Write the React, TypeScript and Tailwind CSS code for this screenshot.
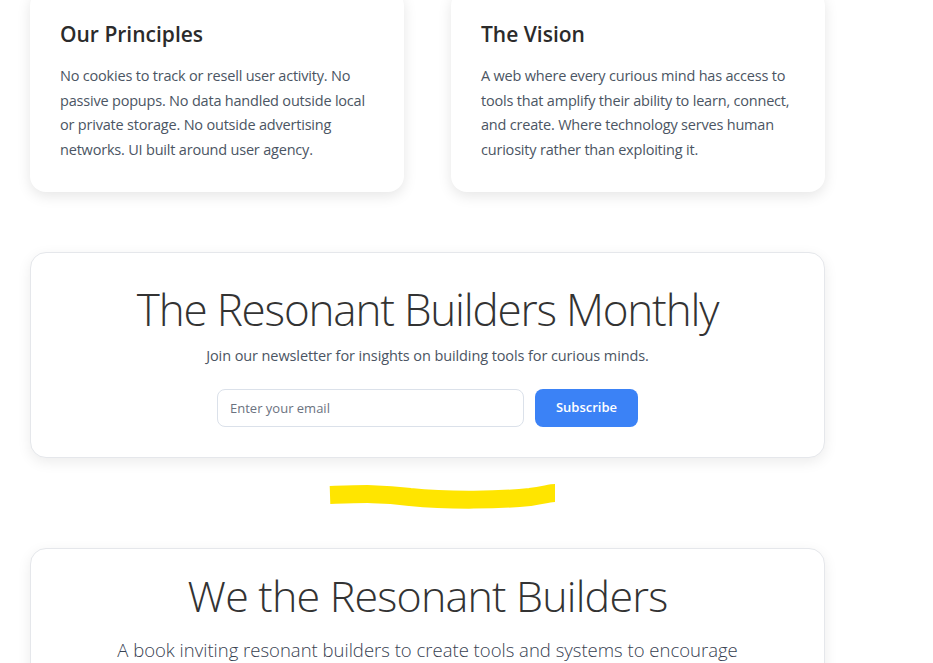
import React from 'react';

const font = { fontFamily: '"Open Sans", "Noto Sans", sans-serif' };

const values = [
  {
    title: 'Our Principles',
    body: 'No cookies to track or resell user activity. No passive popups. No data handled outside local or private storage. No outside advertising networks. UI built around user agency.',
  },
  {
    title: 'The Vision',
    body: 'A web where every curious mind has access to tools that amplify their ability to learn, connect, and create. Where technology serves human curiosity rather than exploiting it.',
  },
];

const Highlight: React.FC = () => (
  <svg className="absolute left-[270px] top-[21px]" width="260" height="40" viewBox="0 0 260 40">
    <path
      d="M30 16 C 60 15, 80 14, 110 18 C 150 22, 200 21, 230 18 C 245 16, 250 14, 255 14"
      fill="none"
      stroke="#ffe500"
      strokeWidth="18"
      strokeLinecap="butt"
    />
  </svg>
);

const App: React.FC = () => {
  return (
    <div className="min-h-screen bg-white overflow-hidden" style={font}>
      <div className="w-[795px] ml-[30px] -mt-[10px]">
        <div className="grid grid-cols-2 gap-[47px]">
          {values.map((v) => (
            <div
              key={v.title}
              className="rounded-2xl bg-white px-[30px] pt-[30px] pb-[30px] shadow-[0_4px_14px_rgba(0,0,0,0.10)]"
            >
              <h3 className="text-[21px] leading-[28px] font-semibold text-[#2b2b2b] mb-[16px]">{v.title}</h3>
              <p className="text-[14.5px] leading-[24.5px] text-[#4b5563] tracking-[-0.2px]">{v.body}</p>
            </div>
          ))}
        </div>

        <div className="mt-[60px] rounded-2xl border border-[#e5e7eb] bg-white pt-[28px] pb-[30px] shadow-[0_4px_14px_rgba(0,0,0,0.08)] flex flex-col items-center">
          <h2 className="text-[44px] leading-[56px] font-light text-[#333333] tracking-[-1.2px]">
            The Resonant Builders Monthly
          </h2>
          <p className="mt-[8px] text-[14.5px] leading-[22px] text-[#4b5563] tracking-[-0.1px]">
            Join our newsletter for insights on building tools for curious minds.
          </p>
          <form className="mt-[22px] flex gap-[11px]" onSubmit={(e) => e.preventDefault()}>
            <input
              type="email"
              placeholder="Enter your email"
              className="w-[307px] h-[38px] rounded-lg border border-[#dbe1ea] px-3 text-[13px] text-[#374151] placeholder:text-[#6b7280] outline-none"
            />
            <button
              type="submit"
              className="w-[103px] h-[38px] rounded-lg bg-[#3b82f6] text-white text-[13px] font-semibold"
            >
              Subscribe
            </button>
          </form>
        </div>

        <div className="relative h-[90px]">
          <Highlight />
        </div>

        <div className="rounded-2xl border border-[#e5e7eb] bg-white pt-[20px] pb-[30px] shadow-[0_4px_14px_rgba(0,0,0,0.08)] flex flex-col items-center">
          <h2 className="text-[43px] leading-[54px] font-light text-[#333333] tracking-[-0.8px]">
            We the Resonant Builders
          </h2>
          <p className="mt-[12px] text-[18.5px] leading-[30px] font-light text-[#374151] text-center px-[70px]">
            A book inviting resonant builders to create tools and systems to encourage curiosity, connection and creativity.
          </p>
        </div>
      </div>
    </div>
  );
};

export default App;
